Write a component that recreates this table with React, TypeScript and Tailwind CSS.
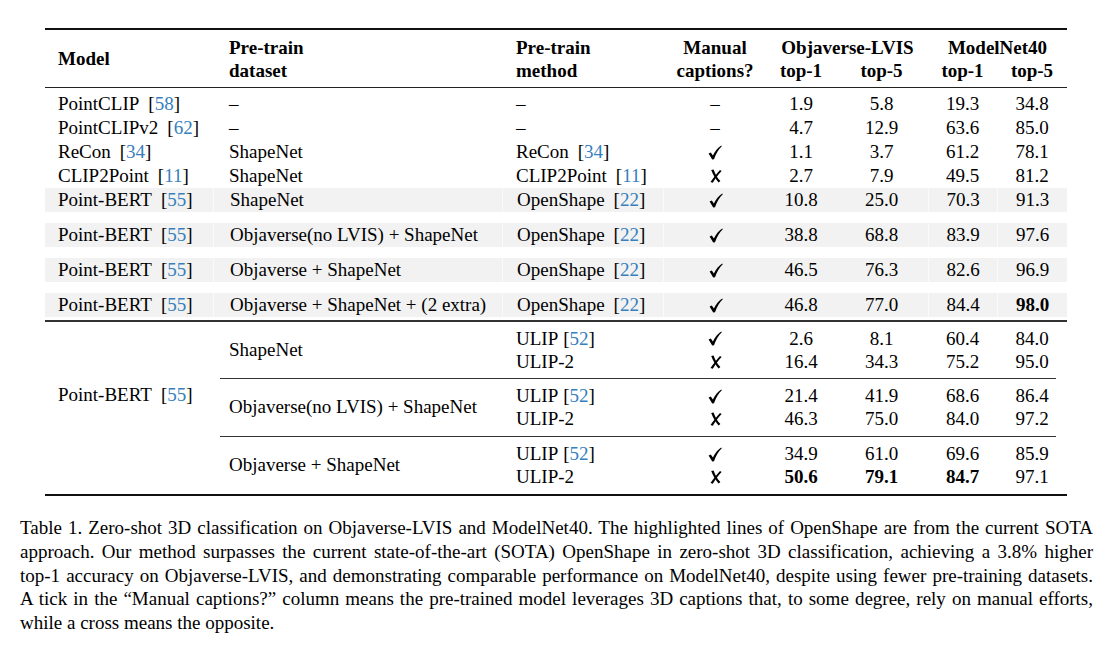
import React from 'react';

const COLS = 'grid grid-cols-[168px_289px_161px_104px_68px_93px_69px_70px]';
const SUB = 'grid grid-cols-[161px_104px_68px_93px_69px_70px]';

type Mark = 'tick' | 'cross' | 'dash';

type Row = {
  model: string;
  mref: string;
  data: string;
  method: string;
  ref?: string;
  man: Mark;
  v: string[];
  bold?: number[];
};

const plainRows: Row[] = [
  { model: 'PointCLIP', mref: '58', data: '–', method: '–', man: 'dash', v: ['1.9', '5.8', '19.3', '34.8'] },
  { model: 'PointCLIPv2', mref: '62', data: '–', method: '–', man: 'dash', v: ['4.7', '12.9', '63.6', '85.0'] },
  { model: 'ReCon', mref: '34', data: 'ShapeNet', method: 'ReCon', ref: '34', man: 'tick', v: ['1.1', '3.7', '61.2', '78.1'] },
  { model: 'CLIP2Point', mref: '11', data: 'ShapeNet', method: 'CLIP2Point', ref: '11', man: 'cross', v: ['2.7', '7.9', '49.5', '81.2'] },
];

const openShapeRows: Row[] = [
  { model: 'Point-BERT', mref: '55', data: 'ShapeNet', method: 'OpenShape', ref: '22', man: 'tick', v: ['10.8', '25.0', '70.3', '91.3'] },
  { model: 'Point-BERT', mref: '55', data: 'Objaverse(no LVIS) + ShapeNet', method: 'OpenShape', ref: '22', man: 'tick', v: ['38.8', '68.8', '83.9', '97.6'] },
  { model: 'Point-BERT', mref: '55', data: 'Objaverse + ShapeNet', method: 'OpenShape', ref: '22', man: 'tick', v: ['46.5', '76.3', '82.6', '96.9'] },
  { model: 'Point-BERT', mref: '55', data: 'Objaverse + ShapeNet + (2 extra)', method: 'OpenShape', ref: '22', man: 'tick', v: ['46.8', '77.0', '84.4', '98.0'], bold: [3] },
];

// ULIP groups share one model cell
const ulipGroups = [
  {
    data: 'ShapeNet',
    h: 'h-[56.5px]',
    rows: [
      { v: ['2.6', '8.1', '60.4', '84.0'], bold: [] as number[] },
      { v: ['16.4', '34.3', '75.2', '95.0'], bold: [] as number[] },
    ],
  },
  {
    data: 'Objaverse(no LVIS) + ShapeNet',
    h: 'h-[56.5px]',
    rows: [
      { v: ['21.4', '41.9', '68.6', '86.4'], bold: [] as number[] },
      { v: ['46.3', '75.0', '84.0', '97.2'], bold: [] as number[] },
    ],
  },
  {
    data: 'Objaverse + ShapeNet',
    h: 'h-[57px]',
    rows: [
      { v: ['34.9', '61.0', '69.6', '85.9'], bold: [] as number[] },
      { v: ['50.6', '79.1', '84.7', '97.1'], bold: [0, 1, 2] },
    ],
  },
];

function Cite({ n }: { n: string }) {
  return (
    <span>
      [<span className="text-[#3680bd]">{n}</span>]
    </span>
  );
}

function ManualMark({ kind }: { kind: Mark }) {
  if (kind === 'dash') return <span>–</span>;
  if (kind === 'tick')
    return (
      <svg width="14" height="15" viewBox="0 0 14 15" className="inline-block">
        <path d="M0.6 8.6 L2.8 7.4 L4.9 10.4 C7 6 9.6 2.8 13.2 0.4 L13.8 1.3 C10.6 4.2 8 8.4 6 14.3 L4.2 14.6 Z" fill="#000" />
      </svg>
    );
  return (
    <svg width="13" height="14" viewBox="0 0 13 14" className="inline-block">
      <path d="M2.2 0.9 L4.6 0.5 C6 4.6 8 8.6 11.4 12.1 L9.6 13.5 C6.6 10 4 5.8 2.2 0.9 Z" fill="#000" />
      <path d="M11 0.9 L12.6 2 C9.2 5.6 6.2 9.6 3.8 13.7 L1.5 13.1 C4.3 8.8 7.4 4.8 11 0.9 Z" fill="#000" />
    </svg>
  );
}

function Nums({ v, bold = [], shade = false }: { v: string[]; bold?: number[]; shade?: boolean }) {
  return (
    <>
      {v.map((x, i) => (
        <div
          key={i}
          className={`flex items-center justify-center ${bold.includes(i) ? 'font-bold' : ''} ${
            shade && (i === 2 || i === 3) ? 'border-l border-[#fafafa]' : ''
          }`}
        >
          {x}
        </div>
      ))}
    </>
  );
}

function PlainRow({ r }: { r: Row }) {
  return (
    <div className={`${COLS} h-6`}>
      <div className="flex items-center pl-[13px]">
        {r.model}
        <span className="ml-[9px]"><Cite n={r.mref} /></span>
      </div>
      <div className="flex items-center pl-[16px]">{r.data}</div>
      <div className="flex items-center pl-[14px]">
        {r.method}
        {r.ref && <span className="ml-[9px]"><Cite n={r.ref} /></span>}
      </div>
      <div className="flex items-center justify-center">
        <ManualMark kind={r.man} />
      </div>
      <Nums v={r.v} bold={r.bold} />
    </div>
  );
}

function ShadedRow({ r }: { r: Row }) {
  return (
    <div className={`${COLS} h-[23.5px] bg-[#f2f2f2]`}>
      <div className="flex items-center pl-[13px]">
        {r.model}
        <span className="ml-[9px]"><Cite n={r.mref} /></span>
      </div>
      <div className="flex items-center pl-[16px] border-l border-[#fafafa]">{r.data}</div>
      <div className="flex items-center pl-[14px] border-l border-[#fafafa]">
        {r.method}
        {r.ref && <span className="ml-[9px]"><Cite n={r.ref} /></span>}
      </div>
      <div className="flex items-center justify-center border-l border-[#fafafa]">
        <ManualMark kind={r.man} />
      </div>
      <Nums v={r.v} bold={r.bold} shade />
    </div>
  );
}

export default function App() {
  return (
    <div className="w-[1113px] h-[650px] bg-white overflow-hidden text-black font-['Liberation_Serif',serif] text-[19px] leading-6">
      <div className="pt-[28px] pl-[45px]">
        <div className="w-[1022px]">
          <div className="h-[2px] bg-[#111]" />

          {/* header */}
          <div className={`${COLS} h-[57px] font-bold leading-[23px]`}>
            <div className="flex items-center pl-[13px]">Model</div>
            <div className="flex flex-col justify-center pl-[16px]">
              <span>Pre-train</span>
              <span>dataset</span>
            </div>
            <div className="flex flex-col justify-center pl-[14px]">
              <span>Pre-train</span>
              <span>method</span>
            </div>
            <div className="flex flex-col justify-center items-center">
              <span>Manual</span>
              <span>captions?</span>
            </div>
            <div className="col-span-2 flex flex-col justify-center">
              <span className="text-center">Objaverse-LVIS</span>
              <div className="grid grid-cols-[68px_93px]">
                <span className="text-center">top-1</span>
                <span className="text-center">top-5</span>
              </div>
            </div>
            <div className="col-span-2 flex flex-col justify-center">
              <span className="text-center">ModelNet40</span>
              <div className="grid grid-cols-[69px_70px]">
                <span className="text-center">top-1</span>
                <span className="text-center">top-5</span>
              </div>
            </div>
          </div>

          <div className="h-px bg-[#222]" />

          <div className="pt-[4px]">
            {plainRows.map((r, i) => (
              <PlainRow key={i} r={r} />
            ))}
          </div>

          <div className="flex flex-col gap-[11.5px]">
            {openShapeRows.map((r, i) => (
              <ShadedRow key={i} r={r} />
            ))}
          </div>

          <div className="mt-[3.5px] h-[1.5px] bg-[#333]" />

          {/* ULIP / ULIP-2 block */}
          <div className="flex">
            <div className="w-[168px] shrink-0 pl-[13px] pt-[61px]">
              Point-BERT<span className="ml-[9px]"><Cite n="55" /></span>
            </div>
            <div className="flex-1 flex flex-col">
              {ulipGroups.map((g, gi) => (
                <React.Fragment key={gi}>
                  {gi > 0 && <div className="ml-[7px] mr-[11px] h-px bg-[#333]" />}
                  <div className={`flex ${g.h}`}>
                    <div className="w-[289px] shrink-0 flex items-center pl-[16px]">{g.data}</div>
                    <div className="flex-1 flex flex-col justify-center">
                      <div className={`${SUB} h-[23px]`}>
                        <div className="flex items-center pl-[14px]">
                          ULIP <span className="ml-[5px]"><Cite n="52" /></span>
                        </div>
                        <div className="flex items-center justify-center">
                          <ManualMark kind="tick" />
                        </div>
                        <Nums v={g.rows[0].v} bold={g.rows[0].bold} />
                      </div>
                      <div className={`${SUB} h-[23px]`}>
                        <div className="flex items-center pl-[14px]">ULIP-2</div>
                        <div className="flex items-center justify-center">
                          <ManualMark kind="cross" />
                        </div>
                        <Nums v={g.rows[1].v} bold={g.rows[1].bold} />
                      </div>
                    </div>
                  </div>
                </React.Fragment>
              ))}
            </div>
          </div>

          <div className="h-[2px] bg-[#111]" />
        </div>
      </div>

      {/* caption */}
      <div className="mt-[20.5px] px-[20px] text-[19px] leading-[23.8px]">
        <p className="text-justify [text-align-last:justify]">
          Table 1. Zero-shot 3D classification on Objaverse-LVIS and ModelNet40. The highlighted lines of OpenShape are from the current SOTA
        </p>
        <p className="text-justify [text-align-last:justify]">
          approach. Our method surpasses the current state-of-the-art (SOTA) OpenShape in zero-shot 3D classification, achieving a 3.8% higher
        </p>
        <p className="text-justify [text-align-last:justify]">
          top-1 accuracy on Objaverse-LVIS, and demonstrating comparable performance on ModelNet40, despite using fewer pre-training datasets.
        </p>
        <p className="text-justify [text-align-last:justify]">
          A tick in the “Manual captions?” column means the pre-trained model leverages 3D captions that, to some degree, rely on manual efforts,
        </p>
        <p>while a cross means the opposite.</p>
      </div>
    </div>
  );
}
